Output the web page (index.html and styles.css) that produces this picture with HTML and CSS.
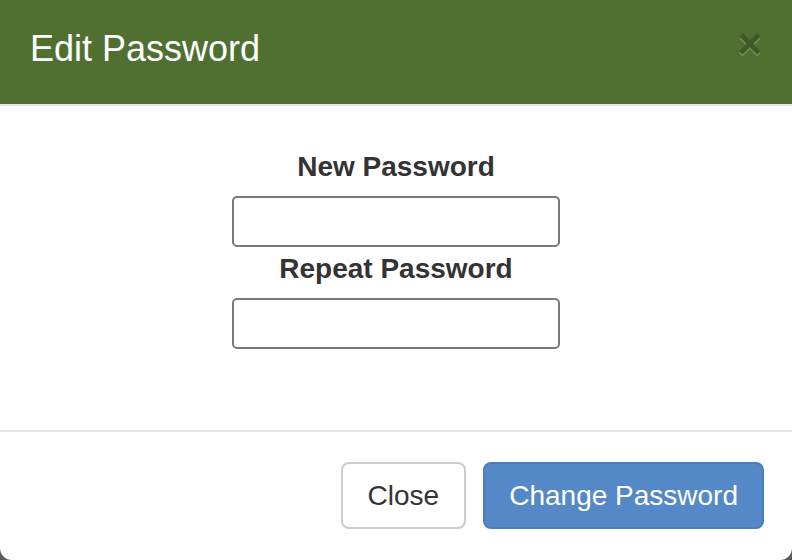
FILE: index.html
```html
<!DOCTYPE html>
<html lang="en">
<head>
<meta charset="utf-8">
<title>Edit Password</title>
<link rel="stylesheet" href="styles.css">
</head>
<body>
<div class="modal">
  <div class="modal-header">
    <h4 class="modal-title">Edit Password</h4>
    <button class="close" type="button" aria-label="Close">×</button>
  </div>
  <div class="modal-body">
    <div class="form-group">
      <label class="field-label" for="pw1">New Password</label>
      <input class="field-input" id="pw1" type="password">
    </div>
    <div class="form-group">
      <label class="field-label" for="pw2">Repeat Password</label>
      <input class="field-input" id="pw2" type="password">
    </div>
  </div>
  <div class="modal-footer">
    <button class="btn btn-default" type="button">Close</button>
    <button class="btn btn-primary" type="button">Change Password</button>
  </div>
</div>
</body>
</html>
```

FILE: styles.css
```css
html, body {
  margin: 0;
  padding: 0;
  height: 100%;
}
body {
  background: #5a5a5a;
  font-family: "Liberation Sans", Arial, Helvetica, sans-serif;
  color: #333;
}
.modal {
  width: 792px;
  height: 560px;
  background: #fff;
  border-radius: 0 0 12px 12px;
  overflow: hidden;
  display: flex;
  flex-direction: column;
}
.modal-header {
  background: #507032;
  height: 104px;
  padding: 0 28px 0 30px;
  border-bottom: 2px solid #e5e5e5;
  display: flex;
  align-items: center;
  justify-content: space-between;
  box-sizing: content-box;
  flex-shrink: 0;
}
.modal-title {
  margin: 0 0 6px;
  color: #fff;
  font-size: 36px;
  font-weight: normal;
  line-height: 44px;
}
.close {
  background: none;
  border: 0;
  padding: 0;
  margin: -16px 2px 0 0;
  font-family: "Liberation Sans", Arial, sans-serif;
  font-size: 42px;
  font-weight: bold;
  line-height: 1;
  color: #000;
  opacity: 0.2;
  text-shadow: 0 2px 0 #fff;
  cursor: pointer;
}
.modal-body {
  padding: 41px 0 81px;
  display: flex;
  flex-direction: column;
  align-items: center;
  gap: 2px;
  flex-shrink: 0;
}
.form-group {
  display: flex;
  flex-direction: column;
  align-items: center;
}
.field-label {
  font-size: 28px;
  font-weight: bold;
  line-height: 40px;
  margin-bottom: 9px;
  color: #333;
}
.field-input {
  width: 328px;
  height: 51px;
  box-sizing: border-box;
  border: 2px solid #7a7a7a;
  border-radius: 5px;
  background: #fff;
  margin: 0;
  padding: 0 10px;
  font-size: 28px;
}
.modal-footer {
  border-top: 2px solid #e5e5e5;
  padding: 30px 28px 31px 0;
  display: flex;
  justify-content: flex-end;
  gap: 17px;
  flex-shrink: 0;
}
.btn {
  font-family: "Liberation Sans", Arial, sans-serif;
  font-size: 28px;
  line-height: 39px;
  padding: 12px 25px;
  border-radius: 8px;
  border: 2px solid transparent;
  cursor: pointer;
}
.btn-default {
  background: #fff;
  border-color: #cccccc;
  color: #333;
}
.btn-primary {
  background: #5588c6;
  border-color: #4b7dbb;
  color: #fff;
  padding: 12px 24px;
}
```
